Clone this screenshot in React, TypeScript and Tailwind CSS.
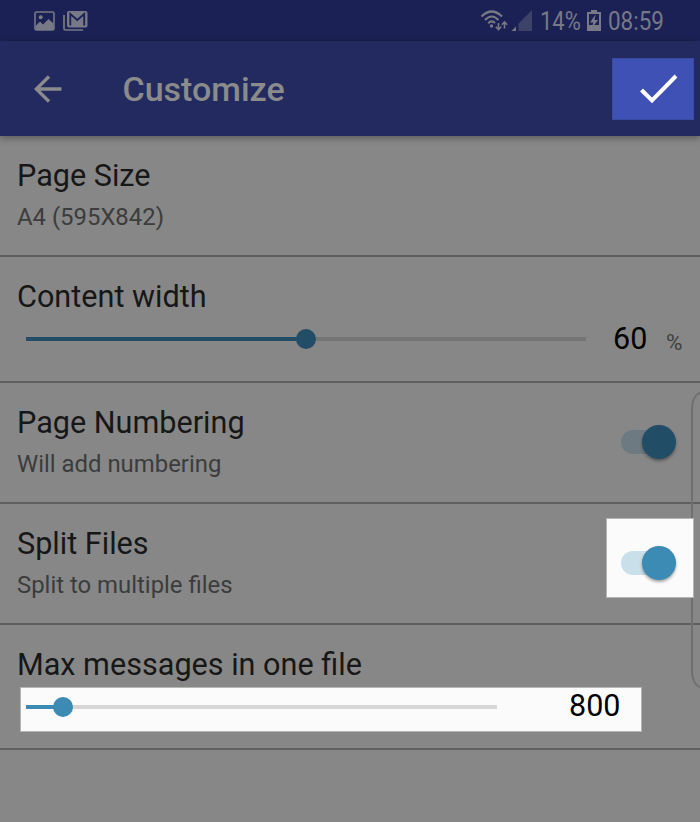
import type { ReactNode } from "react"
import clsx from "clsx"

export default function App() {
  return (
    <div className="relative flex h-[822px] w-[700px] flex-col overflow-hidden bg-[#878787] font-['Roboto',sans-serif]">
      <StatusBar />
      <AppBar />

      <main className="flex flex-col pt-px">
        <Row className="h-[120px] pt-[21px]">
          <Label title="Page Size" subtitle="A4 (595X842)" />
        </Row>

        <Row className="h-[126px] pt-[22px]">
          <div className="flex flex-1 flex-col">
            <Label title="Content width" />
            <div className="mt-[2px] flex h-[44px] items-center pl-[9px]">
              <Slider percent={50} className="w-[560px]" />
              <span className="ml-[27px] w-[53px] pb-px text-[30.5px] leading-9 text-black">60</span>
              <span className="mt-[5px] text-[22.5px] leading-9 text-[#404040]">%</span>
            </div>
          </div>
        </Row>

        <Row className="h-[121px] pt-[22px]">
          <Label title="Page Numbering" subtitle="Will add numbering" />
          <div className="-mt-[3px] mr-[6px] flex h-[80px] w-[88px] items-center pl-[15px]">
            <Toggle />
          </div>
        </Row>

        <Row className="h-[121px] pt-[22px]">
          <Label title="Split Files" subtitle="Split to multiple files" />
          <div className="relative z-10 -mt-[8px] mr-[6px] flex h-[80px] w-[88px] items-center border border-[#b5b5b5] bg-[#fbfbfb] pt-[10px] pl-[14px]">
            <Toggle highlighted />
          </div>
        </Row>

        <Row className="h-[125px] pt-[22px]">
          <div className="flex flex-1 flex-col">
            <Label title="Max messages in one file" />
            <div className="mt-[4px] ml-[3px] flex h-[45px] w-[622px] shrink-0 items-center border border-[#b5b5b5] bg-[#fbfbfb] pb-[5px] pl-[5px]">
              <Slider percent={7.8} highlighted className="w-[471px]" />
              <span className="ml-[72px] pb-[3px] text-[30.5px] leading-9 text-black">800</span>
            </div>
          </div>
        </Row>
      </main>

      {/* Edge panel handle */}
      <div className="absolute top-[392px] -right-[11px] h-[296px] w-[20px] rounded-[12px/20px] border-2 border-[#707070]" />
    </div>
  )
}

function StatusBar() {
  return (
    <div className="flex h-[41px] shrink-0 items-center justify-between bg-[#1b2154] pt-px pr-[34px] pl-[34px] text-[#777987]">
      <div className="flex items-center gap-2">
        <svg className="h-[20px] w-[21px]" viewBox="0 0 21 20" fill="none">
          <rect x="1" y="1" width="19" height="18" rx="1.5" stroke="currentColor" strokeWidth="1.6" />
          <circle cx="6.7" cy="6.2" r="2" fill="currentColor" />
          <path d="M1.5 15L6 10.5L9 13.5L14.5 8L19.5 12.5V19H1.5Z" fill="currentColor" />
        </svg>
        <svg className="h-[20px] w-[25px]" viewBox="0 0 25 20" fill="none">
          <path d="M1 4V17.5Q1 19 2.5 19H20" stroke="currentColor" strokeWidth="1.7" />
          <rect x="4" y="0" width="20.5" height="16.5" rx="2" fill="currentColor" />
          <path d="M7.3 14.5V3L14.3 9L21.2 3V14.5" stroke="#1b2154" strokeWidth="1.8" />
        </svg>
      </div>

      <div className="flex items-center">
        <svg className="h-[22px] w-[52px]" viewBox="0 0 52 22" fill="none" stroke="currentColor" strokeWidth="2.2">
          <path d="M1.5 6.5Q11.7 -3.5 22 6.5" />
          <path d="M5 10Q11.7 3 18.5 10" />
          <path d="M8.2 13.2Q11.7 9.8 15 13" />
          <circle cx="11.5" cy="16" r="1.7" fill="currentColor" stroke="none" />
          <path d="M18.5 13V19.5M15.8 16.8L18.5 19.7L21.2 16.8M24.5 18.5V12M21.8 14.8L24.5 12L27.2 14.8" strokeWidth="1.6" />
          <path d="M52 0V21H38.5V13.5Z" fill="#3d4269" stroke="none" />
          <path d="M36 16.5V21H31.5Z" fill="currentColor" stroke="none" />
        </svg>
        <span className="ml-[8px] w-[40px] origin-left scale-x-[0.86] pt-[2px] text-[25.5px] leading-none">14%</span>
        <svg className="mb-px ml-[7px] h-[22px] w-[14px]" viewBox="0 0 14 22" fill="none">
          <path d="M4 0H10V3H4Z" fill="currentColor" />
          <rect x="1" y="3" width="12" height="17" stroke="currentColor" strokeWidth="2" />
          <path d="M2 15H12V19H2Z" fill="currentColor" />
          <path d="M8.5 4.5L3 12.5H6.2L5 18L11 10H7.5Z" fill="currentColor" />
        </svg>
        <span className="ml-[7px] w-[58px] origin-left scale-x-[0.88] pt-[2px] text-[25.5px] leading-none">08:59</span>
      </div>
    </div>
  )
}

function AppBar() {
  return (
    <header className="relative z-10 flex h-[95px] shrink-0 items-center bg-[#222a60] pr-[6px] pl-[34px] text-[#8b8b8c] shadow-[0_2px_7px_rgba(0,0,0,0.35)]">
      <svg className="h-[28px] w-[28px]" viewBox="0 0 28 28" fill="none" stroke="currentColor" strokeWidth="3.4">
        <path d="M27.5 14H2.5M15 1.5L2.3 14L15 26.5" />
      </svg>
      <h1 className="ml-[60.5px] pt-px text-[34px] leading-none font-medium">Customize</h1>
      <button className="ml-auto flex h-[62px] w-[82px] items-center justify-center border border-[#3a4aa0] bg-[#3f51b5] pl-[12px]">
        <svg className="h-[30px] w-[38px]" viewBox="0 0 38 30" fill="none" stroke="#fff" strokeWidth="4">
          <path d="M1.5 16L12 26.5L36 2" />
        </svg>
      </button>
    </header>
  )
}

function Row({ className, children }: { className: string; children: ReactNode }) {
  return (
    <section className={clsx("flex shrink-0 justify-between border-b-2 border-[#5f5f5f] pl-[17px]", className)}>
      {children}
    </section>
  )
}

function Label({ title, subtitle }: { title: string; subtitle?: string }) {
  return (
    <div className="flex flex-col">
      <h2 className="text-[30.6px] leading-9 text-[#171717]">{title}</h2>
      {subtitle && <p className="mt-[9px] text-[23.9px] leading-7 text-[#3c3c3c]">{subtitle}</p>}
    </div>
  )
}

function Slider({ percent, highlighted, className }: { percent: number; highlighted?: boolean; className: string }) {
  const color = highlighted ? "bg-[#3c8bb5]" : "bg-[#214e66]"
  return (
    <div className={clsx("relative h-1", highlighted ? "bg-[#d7d7d7]" : "bg-[#757575]", className)}>
      <div className={clsx("h-full", color)} style={{ width: `${percent}%` }} />
      <div
        className={clsx("absolute top-1/2 size-[20px] -translate-x-1/2 -translate-y-1/2 rounded-full", color)}
        style={{ left: `${percent}%` }}
      />
    </div>
  )
}

function Toggle({ highlighted }: { highlighted?: boolean }) {
  return (
    <div className={clsx("relative h-[24px] w-[51px] rounded-full", highlighted ? "bg-[#c9dfe9]" : "bg-[#6d7a81]")}>
      <div
        className={clsx(
          "absolute -top-[5px] -right-[4px] size-[34px] rounded-full shadow-[0_2px_3px_rgba(0,0,0,0.35)]",
          highlighted ? "bg-[#3c8bb5]" : "bg-[#214e66]",
        )}
      />
    </div>
  )
}
